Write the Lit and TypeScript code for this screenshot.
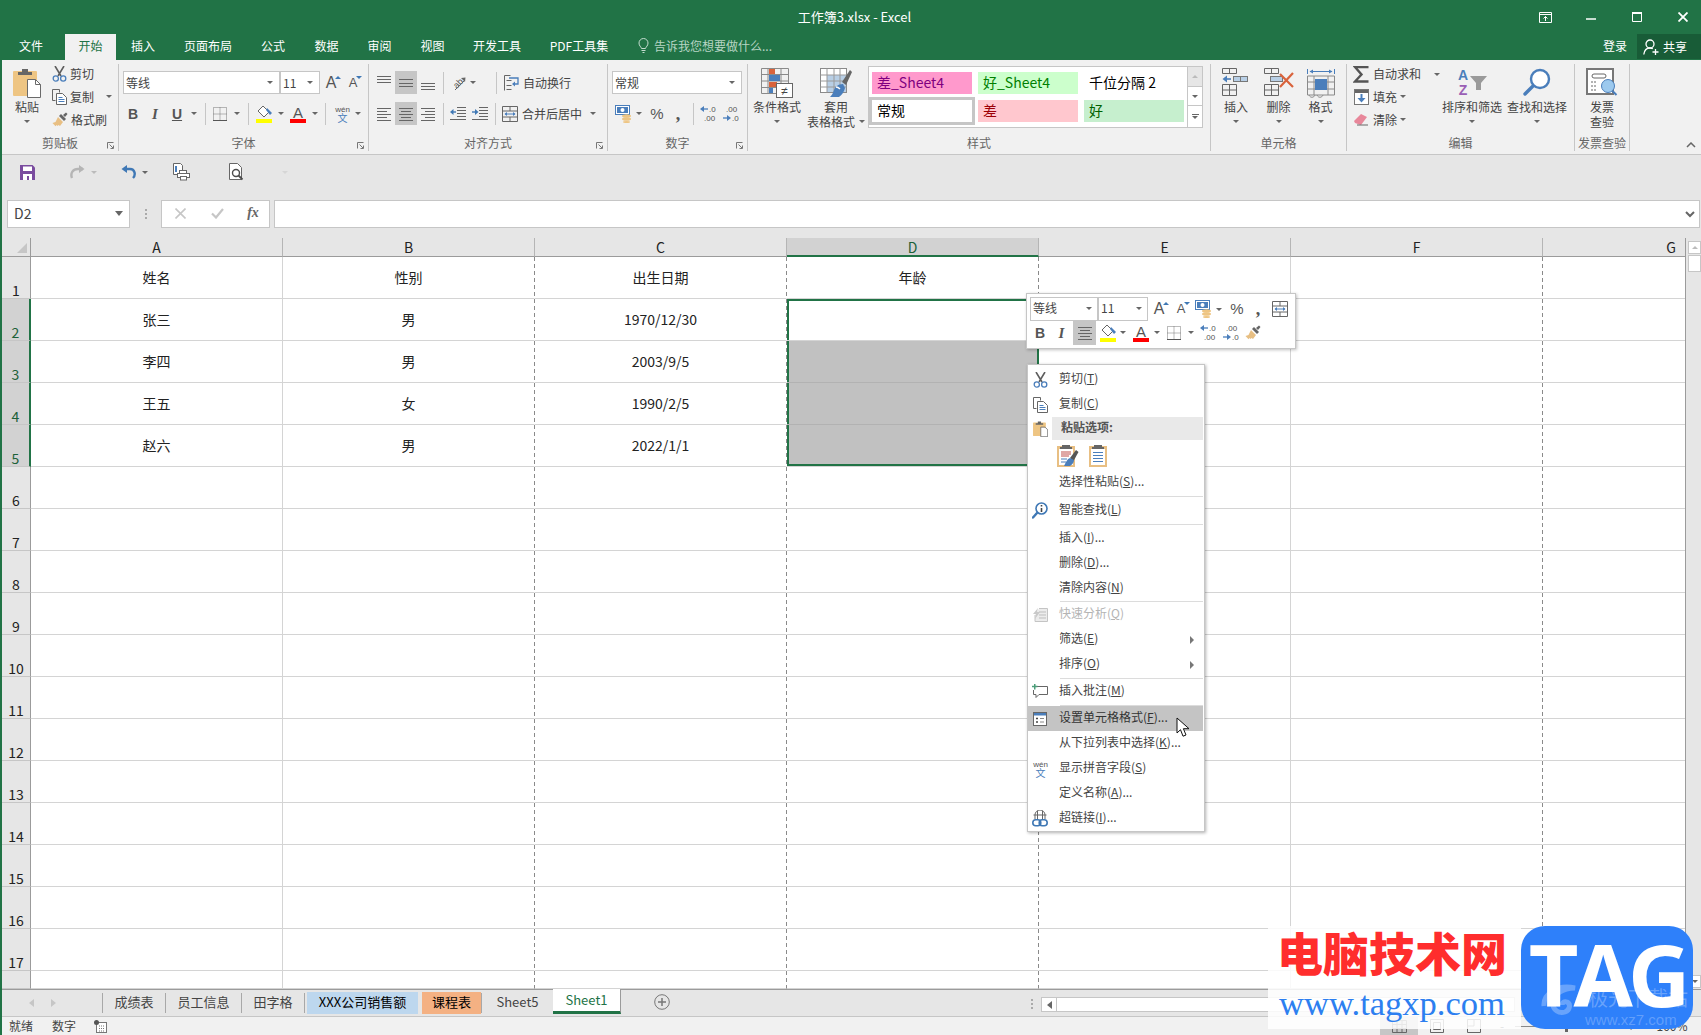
import {LitElement, html, svg, css} from 'lit';
import {customElement} from 'lit/decorators.js';

const caret = html`<i class="caret"></i>`;

// ribbon and menu icons
const icons = {
  paste: html`<svg width="28" height="30" viewBox="0 0 28 30"><rect x="0" y="3" width="24" height="25" rx="1" fill="#eec583"/><path d="M5 7V4h4V1h6v3h4v3z" fill="#666"/><path d="M14.5 11.5h8l5 5v13h-13z" fill="#fff" stroke="#6a6a6a"/><path d="M22.5 11.5v5h5" fill="none" stroke="#6a6a6a"/></svg>`,
  scissors: html`<svg width="15" height="16" viewBox="0 0 15 16"><path d="M3 0l6 10M12 0L6 10" stroke="#5e5e5e" stroke-width="1.6"/><circle cx="3.8" cy="12.5" r="2.6" fill="none" stroke="#4a7ebb" stroke-width="1.3"/><circle cx="11.2" cy="12.5" r="2.6" fill="none" stroke="#4a7ebb" stroke-width="1.3"/></svg>`,
  copy: html`<svg width="15" height="16" viewBox="0 0 15 16"><path d="M.5.5h7v3M.5.5v11h3" fill="none" stroke="#666"/><path d="M4.5 4.5h6l4 4v7h-10z" fill="#fff" stroke="#666"/><path d="M6.500 8.500h4M6.500 10.500h6M6.500 12.500h6" stroke="#4a7ebb"/></svg>`,
  brush: html`<svg width="16" height="16" viewBox="0 0 16 16"><path d="M6 5l5 5-3 4-1.500-1-1 1-1-1-1 1.200L.5 11l3-1z" fill="#e8bf83"/><path d="M7 4l5 5 2-2-5-5z" fill="#666"/><path d="M11 3l3-2.500 1.500 1.500-2.500 3z" fill="#666"/></svg>`,
  border: html`<svg width="14" height="14" viewBox="0 0 14 14"><path d="M.5.5h13v13H.5zM7 .5v13M.5 7h13" fill="none" stroke="#777" stroke-dasharray="1 1"/><path d="M0 13.500h14" stroke="#555"/></svg>`,
  fill: html`<svg width="17" height="18" viewBox="0 0 17 18"><path d="M7 1l6 6-5 5-6-6z" fill="#fff" stroke="#666"/><path d="M11 3l5 5-2 2-4-5z" fill="#4a7ebb"/><rect x="0" y="14" width="16" height="4" fill="#ff0"/></svg>`,
  fontColor: html`<svg width="16" height="18" viewBox="0 0 16 18"><text x="8" y="12.500" text-anchor="middle" font-family="Liberation Sans" font-size="15" fill="#555">A</text><rect x="0" y="14" width="16" height="4" fill="#f00"/></svg>`,
  wrap: html`<svg width="15" height="16" viewBox="0 0 15 16"><path d="M.5 15.500V.5h6M2.500 5.500h5M2.500 10.500h5M2.500 14.500h5" fill="none" stroke="#666"/><path d="M5 3h9v6H9" fill="none" stroke="#4a7ebb" stroke-width="1.300"/><path d="M11 6.500L8 9l3 2.500z" fill="#4a7ebb"/></svg>`,
  merge: html`<svg width="16" height="16" viewBox="0 0 16 16"><path d="M.5.5h15v15H.5zM.5 5h15M.5 11h15M8 .5V5M8 11v4.500" fill="none" stroke="#666"/><path d="M3 8h10" stroke="#4a7ebb"/><path d="M5 6L2.500 8 5 10zM11 6l2.500 2L11 10z" fill="#4a7ebb"/></svg>`,
  orient: html`<svg width="16" height="16" viewBox="0 0 16 16"><text x="3" y="13" transform="rotate(-45 6 9)" font-family="Liberation Sans" font-size="9" fill="#555">ab</text><path d="M5 15L15 5" stroke="#666"/><path d="M11 3l4.500-.5L15 7z" fill="#666"/></svg>`,
  currency: html`<svg width="17" height="18" viewBox="0 0 17 18"><rect x=".5" y=".5" width="14" height="9" fill="#fff" stroke="#4a7ebb"/><rect x="2" y="2" width="11" height="6" fill="#4a7ebb"/><circle cx="7.500" cy="5" r="2" fill="#fff"/><ellipse cx="11.500" cy="11" rx="4.500" ry="1.800" fill="#eec583"/><ellipse cx="11.500" cy="14" rx="4.500" ry="1.800" fill="#eec583"/><ellipse cx="11.500" cy="17" rx="3.500" ry="1" fill="#eec583"/></svg>`,
  decInc: html`<svg width="19" height="17" viewBox="0 0 19 17"><path d="M8 4H2" stroke="#4a7ebb" stroke-width="1.300"/><path d="M4 1L0 4l4 3z" fill="#4a7ebb"/><text x="9" y="7" font-family="Liberation Sans" font-size="8" fill="#555">.0</text><text x="4" y="16" font-family="Liberation Sans" font-size="8" fill="#555">.00</text></svg>`,
  decDec: html`<svg width="19" height="17" viewBox="0 0 19 17"><text x="4" y="7" font-family="Liberation Sans" font-size="8" fill="#555">.00</text><path d="M1 13h6" stroke="#4a7ebb" stroke-width="1.300"/><path d="M5 10l4 3-4 3z" fill="#4a7ebb"/><text x="10" y="16" font-family="Liberation Sans" font-size="8" fill="#555">.0</text></svg>`,
  wen: html`<svg width="17" height="18" viewBox="0 0 17 18"><text x="8.500" y="7" text-anchor="middle" font-family="Liberation Sans" font-size="8" fill="#555">wén</text><text x="8.500" y="17" text-anchor="middle" font-family="Noto Sans CJK SC" font-size="10" fill="#4a7ebb">文</text></svg>`,
  cond: html`<svg width="32" height="30" viewBox="0 0 32 30"><path d="M.5.500h27v25H.5zM7 .5v25M20 .5v25M.5 6.500h27M.5 13h27M.5 19.500h27" fill="none" stroke="#8a8a8a"/><rect x="8" y="1" width="6" height="5" fill="#d9633c"/><rect x="8" y="7" width="11" height="6" fill="#4a7ebb"/><rect x="8" y="14" width="8" height="5" fill="#d9633c"/><rect x="8" y="20" width="4" height="5" fill="#4a7ebb"/><rect x="15.500" y="15.500" width="16" height="14" fill="#fff" stroke="#666"/><text x="23.500" y="26.500" text-anchor="middle" font-family="Liberation Sans" font-size="12" fill="#444">≠</text></svg>`,
  table: html`<svg width="32" height="30" viewBox="0 0 32 30"><rect x=".5" y=".5" width="26" height="24" fill="#fff" stroke="#8a8a8a"/><rect x="7" y="7" width="19" height="17" fill="#b8cfe6"/><path d="M7 .5v24M14 .5v24M20 .5v24M.5 7h26M.5 13h26M.5 19h26" stroke="#9a9a9a"/><path d="M22 14l8-12 2 2-6 13z" fill="#666"/><path d="M23 16c-5 0-8 3-9 6s-2 5-4 7h9c3-2 5-5 6-9z" fill="#4a7ebb"/><path d="M16 19c2 0 3 1 4 2" stroke="#fff" fill="none" stroke-width="1.400"/></svg>`,
  insert: html`<svg width="28" height="28" viewBox="0 0 28 28"><path d="M.5.5h14v5H.5zM7.500.5v5M.5 16.500h14v11H.5zM.5 22h14M7.500 16.500v11" fill="none" stroke="#666"/><rect x="11.500" y="8.500" width="14" height="5" fill="#b8cfe6" stroke="#777"/><path d="M18.500 8.500v5" stroke="#777"/><path d="M9 11H2" stroke="#4a7ebb" stroke-width="1.600"/><path d="M5 7.500L.5 11 5 14.500z" fill="#4a7ebb"/></svg>`,
  remove: html`<svg width="30" height="28" viewBox="0 0 30 28"><path d="M.5.5h14v5H.5zM7.500.5v5M.5 16.500h14v11H.5zM.5 22h14M7.500 16.500v11" fill="none" stroke="#666"/><rect x="6.500" y="8.500" width="12" height="5" fill="#b8cfe6" stroke="#777"/><path d="M16 6l13 13M29 5L16 19" stroke="#d9633c" stroke-width="2.200"/></svg>`,
  format: html`<svg width="28" height="30" viewBox="0 0 28 30"><path d="M.5 1v5M27.500 1v5M3 3.500h22" stroke="#4a7ebb" fill="none"/><path d="M6 1.500L2.500 3.500 6 5.500zM22 1.500l3.500 2-3.500 2z" fill="#4a7ebb"/><path d="M.5 8h27v19H.5zM7 8v19M21 8v19M.5 14h27M.5 21h27" fill="none" stroke="#8a8a8a"/><rect x="8" y="11" width="12" height="11" fill="#4a7ebb"/><path d="M2 27c1 3 5 3 6 0M10 27c1 3 5 3 6 0" fill="none" stroke="#8a8a8a"/></svg>`,
  sigma: html`<svg width="17" height="17" viewBox="0 0 17 17"><path d="M15.500 1H2l6.500 7.500L2 15.500h13.500" fill="none" stroke="#555" stroke-width="2.400"/></svg>`,
  fillDown: html`<svg width="15" height="16" viewBox="0 0 15 16"><rect x=".5" y=".5" width="14" height="15" fill="#fff" stroke="#777"/><rect x="1" y="1" width="13" height="3" fill="#666"/><path d="M7.500 5v7" stroke="#4a7ebb" stroke-width="2"/><path d="M3.500 9l4 4.500 4-4.500z" fill="#4a7ebb"/></svg>`,
  eraser: html`<svg width="16" height="14" viewBox="0 0 16 14"><path d="M8 1l6 3-6 8-6-2-1-2z" fill="#e8879a"/><path d="M4 12h11" stroke="#666"/></svg>`,
  sort: html`<svg width="30" height="28" viewBox="0 0 30 28"><text x="6" y="12" text-anchor="middle" font-family="Liberation Sans" font-weight="700" font-size="14" fill="#4a7ebb">A</text><text x="6" y="27" text-anchor="middle" font-family="Liberation Sans" font-weight="700" font-size="14" fill="#9a5fb5">Z</text><path d="M13 8h17l-6 7v7h-5v-7z" fill="#9a9a9a"/></svg>`,
  find: html`<svg width="28" height="29" viewBox="0 0 28 29"><circle cx="17" cy="11" r="9" fill="#fff" stroke="#4a7ebb" stroke-width="2.400"/><path d="M10 18L2 26" stroke="#4a7ebb" stroke-width="3.400" stroke-linecap="round"/></svg>`,
  invoice: html`<svg width="32" height="28" viewBox="0 0 32 28"><rect x="1" y="1" width="26" height="25" fill="#fff" stroke="#777" stroke-width="2"/><rect x="6" y="6" width="14" height="4" rx="2" fill="none" stroke="#666"/><path d="M5 14h5M5 18h5M5 22h5" stroke="#666" stroke-dasharray="2 1"/><circle cx="22" cy="18" r="6.500" fill="#9cc9ee" stroke="#4a7ebb"/><path d="M26.500 23l4 4" stroke="#4a7ebb" stroke-width="2"/></svg>`,
  save: html`<svg width="15" height="15" viewBox="0 0 15 15"><path d="M0 0h12.500L15 2.500V15H0z" fill="#7a4c9f"/><rect x="3" y="1.500" width="9" height="4.500" fill="#fff"/><rect x="3" y="9" width="9" height="6" fill="#fff"/><rect x="7" y="11" width="2" height="4" fill="#7a4c9f"/></svg>`,
  redo: html`<svg width="15" height="14" viewBox="0 0 15 14"><path d="M2 13C0 8 3 4 8 4h5" fill="none" stroke="#b5b5b5" stroke-width="2.400"/><path d="M9 0l5.500 4L9 8z" fill="#b5b5b5"/></svg>`,
  undo: html`<svg width="15" height="14" viewBox="0 0 15 14"><path d="M4 4h5c5 0 6 6 3 9" fill="none" stroke="#3f78b5" stroke-width="2.400"/><path d="M6 0L.5 4 6 8z" fill="#3f78b5"/></svg>`,
  printPreview: html`<svg width="18" height="18" viewBox="0 0 18 18"><path d="M.5.5h7l2 2v9H.5z" fill="#fff" stroke="#666"/><path d="M3 3v6" stroke="#4a7ebb" stroke-width="2"/><rect x="6.500" y="7.500" width="7" height="3" fill="#fff" stroke="#666"/><rect x="4.500" y="10.500" width="12" height="4" fill="#fff" stroke="#666"/><rect x="7.500" y="13.500" width="6" height="3.500" fill="#fff" stroke="#666"/></svg>`,
  search: html`<svg width="15" height="18" viewBox="0 0 15 18"><path d="M.5.5h8l4 4v12H.5z" fill="#fff" stroke="#666"/><circle cx="7" cy="10" r="3.500" fill="#fff" stroke="#4c4c4c" stroke-width="1.400"/><path d="M9.500 12.500l4 4" stroke="#4c4c4c" stroke-width="1.800"/></svg>`,
  pasteKeep: html`<svg width="22" height="23" viewBox="0 0 22 23"><rect x="0" y="2" width="18" height="21" fill="#e8bf83"/><rect x="2" y="5" width="14" height="16" fill="#fff"/><path d="M5 3V1h8v2h2v2H3V3z" fill="#666"/><path d="M4 8h10M4 10h10M4 12h8" stroke="#c0504d"/><path d="M4 15h6M4 18h5" stroke="#4a7ebb"/><path d="M13 14l6-8 2.500 2-5 9z" fill="#555"/><path d="M13 14c-3 1-4 4-6 8h6c3-2 4-4 4-6z" fill="#4a7ebb"/></svg>`,
  pasteValues: html`<svg width="18" height="23" viewBox="0 0 18 23"><rect x="0" y="2" width="18" height="21" fill="#e8bf83"/><rect x="2" y="5" width="14" height="16" fill="#fff"/><path d="M5 3V1h8v2h2v2H3V3z" fill="#666"/><path d="M4 8.500h10M4 11.500h10M4 14.500h10M4 17.500h10" stroke="#4a7ebb"/></svg>`,
  lookup: html`<svg width="16" height="17" viewBox="0 0 16 17"><circle cx="9.500" cy="6.500" r="5.500" fill="#fff" stroke="#3f78b5" stroke-width="1.600"/><path d="M9.500 6v4M9.500 3v1.500" stroke="#444" stroke-width="1.600"/><path d="M5 11l-4 4.500" stroke="#3f78b5" stroke-width="2.400" stroke-linecap="round"/></svg>`,
  quick: html`<svg width="15" height="14" viewBox="0 0 15 14"><path d="M6 .5h8.500v13H2V7" fill="#ececec" stroke="#c4c4c4"/><path d="M6 4h7M6 7h7M6 10h7" stroke="#bdbdbd"/><path d="M5 0L0 6h3l-1 5 5-7H4z" fill="#c9c9c9"/></svg>`,
  comment: html`<svg width="16" height="15" viewBox="0 0 16 15"><path d="M5 2.500h10.500v8H7l-3 3v-3H1.500V6" fill="#fff" stroke="#666"/><path d="M0 2.500h5.500M2.750 0v5.500" stroke="#4c9e7a" stroke-width="1.500"/></svg>`,
  cellFmt: html`<svg width="14" height="14" viewBox="0 0 14 14"><rect x=".5" y=".5" width="13" height="13" fill="#fff" stroke="#666"/><rect x="1" y="1" width="12" height="2.500" fill="#4a7ebb"/><path d="M3 6.500h2M3 10h2" stroke="#444" stroke-width="1.400"/><path d="M7 6.500h4M7 10h4" stroke="#888"/></svg>`,
  link: html`<svg width="16" height="17" viewBox="0 0 16 17"><path d="M3 9V5a5 5 0 0 1 10 0v4M1.500 5h13M5.500 1v8M10.500 1v8" fill="none" stroke="#666"/><rect x=".8" y="9.800" width="8" height="6" rx="3" fill="none" stroke="#3f78b5" stroke-width="1.600"/><rect x="7.200" y="9.800" width="8" height="6" rx="3" fill="none" stroke="#3f78b5" stroke-width="1.600"/></svg>`,
  cursor: html`<svg width="14" height="21" viewBox="0 0 14 21"><path d="M1 1v15l3.500-3.300 2.500 6.500 3-1.200-2.600-6.300H13z" fill="#fff" stroke="#111"/></svg>`,
  person: html`<svg width="17" height="16" viewBox="0 0 17 16"><circle cx="7" cy="5" r="4" fill="none" stroke="#fff" stroke-width="1.300"/><path d="M.8 15.500c.5-4 3-6.500 6.200-6.500 1 0 2 .2 2.800.7" fill="none" stroke="#fff" stroke-width="1.300"/><path d="M9.500 13h6M12.500 10v6" stroke="#fff" stroke-width="1.300"/></svg>`,
  bulb: html`<svg width="11" height="16" viewBox="0 0 11 16"><path d="M3.500 10.500C3 8.500 1 8 1 5a4.500 4.500 0 0 1 9 0c0 3-2 3.500-2.500 5.500z" fill="none" stroke="#c4dccf"/><path d="M3.500 12.500h4M4.500 14.500h2" stroke="#c4dccf"/></svg>`,
  launcher: html`<svg width="7" height="7" viewBox="0 0 7 7"><path d="M.5 6.500v-6h6M2.500 2.500l3.500 3.500M6.500 3.500v3h-3" fill="none" stroke="#777"/></svg>`,
  macro: html`<svg width="13" height="13" viewBox="0 0 13 13"><rect x="2.500" y="2.500" width="10" height="10" fill="#fff" stroke="#777"/><path d="M5 6h6M5 8.500h6M5 11h6" stroke="#777" stroke-dasharray="1 1"/><circle cx="2.500" cy="2.500" r="2.500" fill="#555"/></svg>`,
};

const alignIcon = (ys: number[], xs: [number, number][]) => html`<svg width="14" height="14" viewBox="0 0 14 14">
  ${ys.map((y, i) => svg`<path d="M${xs[i][0]} ${y + .5}H${xs[i][1]}" stroke="#666"/>`)}
</svg>`;
const full: [number, number][] = [[0, 14], [0, 14], [0, 14]];
const aTop = alignIcon([0, 3, 6], full);
const aMid = alignIcon([3, 7, 10], full);
const aBot = alignIcon([7, 10, 13], full);
const aLeft = alignIcon([1, 4, 7, 10, 13], [[0, 14], [0, 10], [0, 14], [0, 10], [0, 14]]);
const aCenter = alignIcon([1, 4, 7, 10, 13], [[0, 14], [2, 12], [0, 14], [2, 12], [0, 14]]);
const aRight = alignIcon([1, 4, 7, 10, 13], [[0, 14], [4, 14], [0, 14], [4, 14], [0, 14]]);
const indentDec = html`<svg width="16" height="13" viewBox="0 0 16 13"><path d="M7 .5h9M7 3.500h9M7 6.500h9M7 9.500h9M0 12.500h16" stroke="#666"/><path d="M6 5H2" stroke="#3f78b5" stroke-width="1.400"/><path d="M3.500 2L0 5l3.500 3z" fill="#3f78b5"/></svg>`;
const indentInc = html`<svg width="16" height="13" viewBox="0 0 16 13"><path d="M7 .5h9M7 3.500h9M7 6.500h9M7 9.500h9M0 12.500h16" stroke="#666"/><path d="M0 5h4" stroke="#3f78b5" stroke-width="1.400"/><path d="M3 2l3.500 3L3 8z" fill="#3f78b5"/></svg>`;

type MenuRow = {label?: string, key?: string, after?: string, icon?: unknown, sub?: boolean, off?: boolean, hot?: boolean, sep?: string};

const menu: MenuRow[] = [
  {label: '剪切', key: 'T', icon: icons.scissors},
  {label: '复制', key: 'C', icon: icons.copy},
  {sep: 'paste'},
  {label: '选择性粘贴', key: 'S', after: '...'},
  {sep: 'wide'},
  {label: '智能查找', key: 'L', icon: icons.lookup},
  {sep: 'wide'},
  {label: '插入', key: 'I', after: '...'},
  {label: '删除', key: 'D', after: '...'},
  {label: '清除内容', key: 'N'},
  {sep: 'thin'},
  {label: '快速分析', key: 'Q', icon: icons.quick, off: true},
  {label: '筛选', key: 'E', sub: true},
  {label: '排序', key: 'O', sub: true},
  {sep: 'mid'},
  {label: '插入批注', key: 'M', icon: icons.comment},
  {sep: 'mid'},
  {label: '设置单元格格式', key: 'F', after: '...', icon: icons.cellFmt, hot: true},
  {label: '从下拉列表中选择', key: 'K', after: '...'},
  {label: '显示拼音字段', key: 'S', icon: icons.wen},
  {label: '定义名称', key: 'A', after: '...'},
  {label: '超链接', key: 'I', after: '...', icon: icons.link},
];

const columns = ['A', 'B', 'C', 'D', 'E', 'F', 'G'];
const table: Record<number, string[]> = {
  1: ['姓名', '性别', '出生日期', '年龄'],
  2: ['张三', '男', '1970/12/30', ''],
  3: ['李四', '男', '2003/9/5', ''],
  4: ['王五', '女', '1990/2/5', ''],
  5: ['赵六', '男', '2022/1/1', ''],
};
const rows = Array.from({length: 18}, (_, i) => i + 1);

@customElement('app-root')
export class AppRoot extends LitElement {
  static styles = css`
    :host {
      display: block;
      position: relative;
      width: 1701px;
      height: 1035px;
      overflow: hidden;
      box-sizing: border-box;
      border-left: 2px solid #217346;
      background: #f1f1f1;
      font-family: 'Noto Sans CJK SC', 'Liberation Sans', sans-serif;
      font-size: 12px;
      line-height: 16px;
      color: #444;
    }
    svg { display: block; }
    i.caret {
      display: block;
      width: 0;
      height: 0;
      border: 3px solid transparent;
      border-top: 3.5px solid #666;
      border-bottom: 0;
    }
    i.caret.faintc { border-top-color: #bbb; }
    u { text-underline-offset: 1px; }

    .titlebar {
      height: 34px;
      background: #217346;
      color: #fff;
      display: grid;
      grid-template-columns: 1fr auto 1fr;
      align-items: center;
      font-size: 13px;
    }
    .title { padding-left: 6px; }
    .winbtns {
      justify-self: end;
      display: grid;
      grid-template-columns: repeat(4, 46px);
      margin-right: -5px;
      justify-items: center;
    }
    .tabs {
      height: 26px;
      background: #217346;
      color: #fff;
      display: flex;
      align-items: stretch;
    }
    .tablist {
      display: grid;
      grid-template-columns: 63px 51px 54px 76px 54px 53px 53px 53px 76px 88px;
      width: 621px;
    }
    .tab { display: flex; align-items: center; justify-content: center; padding-bottom: 2px; box-sizing: border-box; }
    .tab:first-child { padding-right: 5px; }
    .tab.on { background: #f1f1f1; color: #217346; }
    .tell {
      display: flex;
      align-items: center;
      gap: 5px;
      margin-left: 15px;
      color: #b7d5c4;
      padding-bottom: 2px;
    }
    .login { margin-left: auto; width: 40px; box-sizing: border-box; padding-right: 4px; text-align: center; line-height: 24px; }
    .share {
      width: 64px;
      box-sizing: border-box;
      background: #185c37;
      display: flex;
      align-items: center;
      gap: 3px;
      padding-left: 6px;
      margin-bottom: 1px;
    }

    .ribbon {
      height: 95px;
      box-sizing: border-box;
      border-bottom: 1px solid #c6c6c6;
      display: flex;
      align-items: flex-start;
      padding-top: 4px;
      background: #f1f1f1;
    }
    .group {
      height: 87px;
      box-sizing: border-box;
      border-right: 1px solid #c6c6c6;
      display: flex;
      flex-direction: column;
      flex: none;
    }
    .g-clip { width: 117px; }
    .g-font { width: 250px; }
    .g-align { width: 239px; }
    .g-num { width: 140px; }
    .g-style { width: 463px; }
    .g-cell { width: 136px; }
    .g-edit { width: 228px; }
    .g-inv { width: 55px; }
    .body { flex: 1; min-height: 0; }
    .glabel {
      height: 16px;
      line-height: 16px;
      text-align: center;
      color: #666;
      position: relative;
    }
    .launch { position: absolute; right: 4px; bottom: 2px; }

    .large {
      display: flex;
      flex-direction: column;
      align-items: center;
      padding-top: 4px;
      line-height: 15px;
      white-space: nowrap;
      flex: none;
    }
    .large .ic { height: 31px; display: flex; align-items: flex-start; justify-content: center; }
    .large .drop { height: 15px; display: flex; align-items: center; gap: 4px; }
    .w58 { width: 58px; }
    .w60 { width: 60px; }
    .small { display: flex; align-items: center; gap: 5px; white-space: nowrap; padding-bottom: 2px; box-sizing: border-box; }

    .b-clip { display: grid; grid-template-columns: 50px 1fr; }
    .clip-list { display: grid; grid-template-rows: 22px 23px 23px; }
    .clip-list .small { gap: 3px; }
    .clip-list .copy-caret { margin-left: 9px; }

    .stack { padding-top: 7px; display: grid; grid-template-rows: 23px 23px; row-gap: 8px; }
    .row { display: grid; align-items: center; justify-items: center; }
    .sep { width: 1px; height: 22px; background: #c6c6c6; }
    .on { background: #c6c6c6; align-self: stretch; justify-self: stretch; display: flex; align-items: center; justify-content: center; }
    .combo {
      height: 23px;
      box-sizing: border-box;
      background: #fff;
      border: 1px solid #c6c6c6;
      display: flex;
      align-items: center;
      justify-content: space-between;
      padding: 0 6px 0 2px;
      justify-self: stretch;
      color: #444;
    }
    .b { font-family: 'Liberation Sans', sans-serif; font-size: 14px; font-weight: 700; color: #555; }
    .it { font-family: 'Liberation Serif', serif; font-size: 15px; font-style: italic; font-weight: 700; color: #555; }
    .un { font-family: 'Liberation Sans', sans-serif; font-size: 14px; font-weight: 700; color: #555; text-decoration: underline; }
    .pct { font-family: 'Liberation Sans', sans-serif; font-size: 15px; color: #555; }
    .cm { font-family: 'Liberation Serif', serif; font-size: 18px; font-weight: 700; color: #555; line-height: 12px; }
    .grow { font-family: 'Liberation Sans', sans-serif; font-size: 16px; color: #555; position: relative; }
    .shrink { font-family: 'Liberation Sans', sans-serif; font-size: 13px; color: #555; position: relative; }
    .grow::after, .shrink::after {
      content: '';
      position: absolute;
      right: -5px;
      top: 1px;
      border: 3px solid transparent;
      border-top: 0;
      border-bottom: 3.5px solid #3f78b5;
    }
    .shrink::after { border-bottom: 0; border-top: 3.5px solid #3f78b5; }

    .b-font { padding-left: 3px; }
    .font-top { grid-template-columns: 157px 40px 22px 22px; margin-left: 1px; }
    .font-bot { grid-template-columns: 22px 22px 22px 12px 10px 20px 14px 8px 24px 10px 24px 10px 10px 24px 8px; }
    .b-align { padding-left: 3px; }
    .al-top { grid-template-columns: 23px 22px 22px 8px 22px 8px 15px 8px 22px auto; width: fit-content; }
    .al-bot { grid-template-columns: 23px 22px 22px 8px 22px 22px 8px 22px 60px 24px; width: fit-content; }
    .al-text { justify-self: start; padding-left: 1px; white-space: nowrap; }
    .b-num { padding-left: 4px; }
    .num-top { grid-template-columns: 130px; }
    .num-bot { grid-template-columns: 22px 10px 2px 22px 20px 10px 22px 22px; }

    .b-style { display: flex; align-items: flex-start; }
    .gallery {
      margin: 2px 0 0 2px;
      width: 335px;
      height: 62px;
      box-sizing: border-box;
      background: #fff;
      border: 1px solid #c6c6c6;
      display: flex;
    }
    .g-cells {
      flex: 1;
      padding: 5px 0 0 3px;
      display: grid;
      grid-template-columns: repeat(3, 100px);
      grid-auto-rows: 22px;
      column-gap: 6px;
      row-gap: 6px;
      font-size: 14px;
      line-height: 20px;
      color: #000;
    }
    .g-cells div { padding-left: 5px; white-space: nowrap; }
    .bad2 { background: #ff99cc; color: #800080; }
    .good2 { background: #ccffcc; color: #008000; }
    .normal { box-shadow: 0 0 0 3px #c6c6c6; }
    .bad { background: #ffc7ce; color: #9c0006; }
    .good { background: #c6efce; color: #006100; }
    .g-scroll {
      width: 14px;
      display: grid;
      grid-template-rows: 20px 19px 21px;
      border-left: 1px solid #c6c6c6;
      justify-items: center;
      align-items: center;
    }
    .g-scroll > div { border-bottom: 1px solid #c6c6c6; justify-self: stretch; align-self: stretch; display: flex; align-items: center; justify-content: center; }
    .g-scroll .first { background: #e6e6e6; }
    .g-scroll .last { border: 0; flex-direction: column; gap: 1px; }
    .bar { width: 7px; height: 1px; background: #666; }
    .up { border-top: 0 !important; border-bottom: 3.5px solid #bbb !important; }

    .b-cell { padding-left: 4px; display: grid; grid-template-columns: 42px 43px 41px; }
    .b-edit { padding-left: 5px; display: grid; grid-template-columns: 90px 60px 5px 60px; }
    .edit-list { display: grid; grid-template-rows: 22px 23px 23px; }
    .edit-list .small { gap: 3px; }
    .edit-list .ic { width: 18px; display: flex; justify-content: center; }
    .edit-list .sum { margin-left: 10px; }
    .collapse { margin: 78px 0 0 auto; padding-right: 5px; }

    .qat {
      height: 36px;
      box-sizing: border-box;
      padding-bottom: 2px;
      background: #e6e6e6;
      display: grid;
      grid-template-columns: 22px 28px 22px 12px 17px 22px 12px 20px 22px 32px 22px 32px 12px 1fr;
      padding-left: 14px;
      align-items: center;
      justify-items: center;
    }
    .faint { opacity: .12; }
    .fbar {
      height: 47px;
      box-sizing: border-box;
      background: #e6e6e6;
      padding: 9px 1px 10px 5px;
      display: flex;
    }
    .fbox { background: #fff; border: 1px solid #c6c6c6; box-sizing: border-box; height: 28px; }
    .name { width: 123px; display: flex; align-items: center; justify-content: space-between; padding: 0 6px 2px; font-size: 14px; }
    .name i.caret { border-width: 4px; border-top-width: 5px; }
    .dots { width: 31px; display: flex; flex-direction: column; align-items: center; justify-content: center; gap: 2px; }
    .dots span { width: 2px; height: 2px; background: #aaa; }
    .fx { width: 109px; padding-bottom: 2px; display: grid; grid-template-columns: 37px 36px 36px; align-items: center; justify-items: center; }
    .fxt { font-family: 'Liberation Serif', serif; font-style: italic; font-weight: 700; font-size: 14px; color: #666; }
    .input { flex: 1; margin-left: 4px; display: flex; align-items: center; justify-content: flex-end; padding-right: 4px; }

    .sheet { display: flex; height: 751px; }
    .grid {
      width: 1684px;
      box-sizing: border-box;
      border-right: 1px solid #9b9b9b;
      display: grid;
      grid-template-columns: 29px repeat(6, 252px) 1fr;
      grid-template-rows: 19px repeat(17, 42px) 18px;
      background: #fff;
      overflow: hidden;
      color: #222;
      font-size: 14px;
    }
    .corner { background: #e6e6e6; border-bottom: 1px solid #9b9b9b; border-right: 1px solid #9b9b9b; display: flex; align-items: flex-end; justify-content: flex-end; padding: 0 3px 3px 0; }
    .tri { width: 0; height: 0; border-style: solid; border-width: 0 0 10px 10px; border-color: transparent transparent #c6c6c6 transparent; }
    .chead {
      background: #e6e6e6;
      border-bottom: 1px solid #9b9b9b;
      border-right: 1px solid #b5b5b5;
      display: flex;
      align-items: center;
      justify-content: center;
      box-sizing: border-box;
      padding-bottom: 1px;
    }
    .chead.last { border-right: 0; justify-content: flex-end; padding-right: 9px; }
    .chead.sel { background: #d2d2d2; border-bottom: 2px solid #217346; color: #1c6138; padding-bottom: 0; }
    .rhead {
      background: #e6e6e6;
      border-bottom: 1px solid #c6c6c6;
      border-right: 1px solid #9b9b9b;
      box-sizing: border-box;
      display: flex;
      align-items: flex-end;
      justify-content: center;
    }
    .rhead.sel { background: #d2d2d2; color: #1c6138; border-right: 2px solid #217346; }
    .cell {
      box-sizing: border-box;
      border-right: 1px solid #d4d4d4;
      border-bottom: 1px solid #d4d4d4;
      padding-bottom: 2px;
      display: flex;
      align-items: center;
      justify-content: center;
    }
    /* page break lines: longer dashes than border-style dashed gives */
    .cell.brk {
      border-right: 1px solid transparent;
      background-image: repeating-linear-gradient(to bottom, #8a8a8a 0 4px, transparent 4px 7px);
      background-size: 1px 100%;
      background-position: right top;
      background-repeat: no-repeat;
      background-origin: border-box;
    }
    .cell.last { border-right: 0; }
    .cell.d2, .cell.d3, .cell.d5 { border-right: 1px solid #217346; }
    .cell.d2 { box-shadow: inset 2px 2px 0 #217346, inset -1px 0 0 #217346; }
    .cell.d3 { background-color: #c1c1c1; box-shadow: inset 2px 0 0 #217346, inset -1px 0 0 #217346; border-bottom-color: #b2b2b2; }
    .cell.d5 { background-color: #c1c1c1; box-shadow: inset 2px -2px 0 #217346, inset -1px 0 0 #217346; }
    .vscroll {
      flex: 1;
      background: #e6e6e6;
      padding: 3px 0 0 2px;
      display: flex;
      flex-direction: column;
    }
    .vbtn { height: 13px; background: #fff; border: 1px solid #c6c6c6; box-sizing: border-box; display: flex; align-items: center; justify-content: center; }
    .thumb { height: 17px; background: #fff; border: 1px solid #c6c6c6; box-sizing: border-box; margin-top: 1px; }
    .vbtn.down { margin-top: auto; margin-bottom: 1px; }

    .sheets {
      height: 28px;
      box-sizing: border-box;
      background: #e6e6e6;
      border-top: 1px solid #9b9b9b;
      border-bottom: 1px solid #c6c6c6;
      display: flex;
      align-items: flex-start;
      font-size: 13px;
      padding-top: 2px;
    }
    .nav { width: 100px; display: grid; grid-template-columns: 16px 29px; padding-left: 21px; box-sizing: border-box; height: 22px; align-items: center; justify-items: center; flex: none; }
    .lf { width: 0; height: 0; border: 4px solid transparent; border-left: 0; border-right: 5px solid #c6c6c6; }
    .rt { width: 0; height: 0; border: 4px solid transparent; border-right: 0; border-left: 5px solid #c6c6c6; }
    .stabs { display: grid; grid-template-columns: 63px 76px 63px 3px 111px 4px 59px 1px 71px 68px; height: 22px; flex: none; }
    .st {
      display: flex;
      align-items: center;
      justify-content: center;
      box-sizing: border-box;
      border-left: 1px solid #a8a8a8;
      margin: 1px 0;
      padding-bottom: 3px;
      white-space: nowrap;
    }
    .st.plain { border-left: 0; margin: 0; }
    .st.blue { background: #bdd7ee; color: #000; border: 0; margin: 0; }
    .st.orange { background: #f4b183; color: #000; border: 0; margin: 0; }
    .st.active {
      background: #fff;
      color: #217346;
      border: 0;
      border-right: 1px solid #9b9b9b;
      border-bottom: 3px solid #217346;
      margin: -3px 0 0;
      padding-bottom: 0;
      height: 25px;
    }
    .plus { width: 82px; display: flex; justify-content: center; flex: none; padding-top: 2px; }
    .sh-dots { margin-left: auto; width: 14px; display: flex; flex-direction: column; align-items: center; gap: 2px; padding-top: 7px; }
    .sh-dots span { width: 2px; height: 2px; background: #aaa; }
    .hscroll { margin: 5px 186px 0 2px; width: 474px; height: 15px; box-sizing: border-box; background: #fff; border: 1px solid #c6c6c6; display: flex; }
    .hleft { width: 14px; border-right: 1px solid #c6c6c6; display: flex; align-items: center; justify-content: center; }
    .hleft .lf { border-right-color: #666; }

    .status {
      height: 18px;
      display: flex;
      align-items: center;
      padding-left: 7px;
      background: #f1f1f1;
    }
    .status .ready { width: 43px; }
    .status .numlabel { width: 42px; }
    .views { margin-left: auto; display: grid; grid-template-columns: 38px 37px 38px 18px 108px 24px 58px; height: 18px; align-items: center; justify-items: center; }
    .view-on { background: #c6c6c6; justify-self: stretch; align-self: stretch; display: flex; align-items: center; justify-content: center; }
    .slider { width: 100px; height: 1px; background: #888; position: relative; }
    .knob { position: absolute; left: 50px; top: -5px; width: 3px; height: 11px; background: #666; }

    /* floating bits over the sheet */
    .mini {
      position: absolute;
      left: 1024px;
      top: 293px;
      width: 270px;
      height: 56px;
      box-sizing: border-box;
      background: #fff;
      border: 1px solid #c6c6c6;
      box-shadow: 1px 1px 3px rgba(0, 0, 0, .25);
      padding: 3px 3px 0;
    }
    .mini-top { grid-template-columns: 68px 50px 22px 22px 22px 10px 26px 16px 28px; height: 24px; }
    .mini-bot { grid-template-columns: 20px 23px 23px 24px 6px 3px 24px 8px 4px 18px 4px 8px 3px 22px 22px 22px; height: 25px; margin-top: -1px; }
    .mini .combo { padding-right: 5px; padding-bottom: 2px; height: 24px; }

    .menu {
      position: absolute;
      left: 1025px;
      top: 364px;
      width: 178px;
      height: 468px;
      box-sizing: border-box;
      padding-top: 2px;
      background: #fff;
      border: 1px solid #c6c6c6;
      box-shadow: 1px 1px 3px rgba(0, 0, 0, .3);
    }
    .mi {
      height: 25px;
      display: grid;
      grid-template-columns: 31px 1fr 20px;
      align-items: center;
      margin-right: 1px;
      color: #444;
      white-space: nowrap;
    }
    .mi .mic { justify-self: center; margin-right: 7px; }
    .mi .mtx { padding-bottom: 3px; }
    .mi.off { color: #b4b4b4; }
    .mi.hot { background: #c4c4c4; color: #333; }
    .sub { width: 0; height: 0; border: 4px solid transparent; border-right: 0; border-left: 4px solid #777; justify-self: end; margin-right: 9px; }
    .msep { height: 3px; display: flex; align-items: center; padding-left: 32px; margin-right: 1px; }
    .msep.thin { height: 1px; }
    .msep.mid { height: 2px; }
    .msep span { flex: 1; height: 1px; background: #dcdcdc; }
    .mhead { height: 23px; display: grid; grid-template-columns: 24px 1fr; align-items: center; margin-right: 1px; }
    .mhead .mic { justify-self: center; padding-left: 1px; }
    .mhead b { background: #e9e9e9; height: 23px; line-height: 20px; padding-left: 9px; font-weight: 700; color: #555; }
    .mpaste { height: 30px; box-sizing: border-box; display: flex; padding: 4px 0 0 29px; gap: 10px; }
    .ptr { position: absolute; left: 1174px; top: 717px; }

    .mark {
      position: absolute;
      left: 1266px;
      top: 926px;
      width: 425px;
      height: 103px;
      display: flex;
    }
    .mark-text {
      width: 253px;
      box-sizing: border-box;
      background: rgba(255, 255, 255, .85);
      display: flex;
      flex-direction: column;
      align-items: center;
      padding: 0 5px 0 0;
      flex: none;
    }
    .mark-cn { font-size: 46px; line-height: 50px; font-weight: 900; color: #ff2d2d; letter-spacing: 0; }
    .mark-en { font-family: 'Liberation Serif', serif; font-size: 34.500px; line-height: 40px; color: #2d7ff0; margin-top: 7px; }
    .tag {
      width: 172px;
      background: #2e80fa;
      border-radius: 24px;
      position: relative;
      overflow: hidden;
      color: #fff;
      font-family: 'Open Sans', 'Liberation Sans', sans-serif;
      font-weight: 700;
      font-size: 86px;
      line-height: 96px;
      letter-spacing: -5px;
      text-align: center;
    }
    .tag-sub { position: absolute; left: 67px; top: 60px; font-family: 'Noto Sans CJK SC', sans-serif; font-size: 20px; line-height: 24px; letter-spacing: 0; font-weight: 400; color: rgba(255, 255, 255, .28); white-space: nowrap; }
    .tag-url { position: absolute; left: 64px; top: 86px; font-family: 'Liberation Sans', sans-serif; font-size: 15px; line-height: 16px; letter-spacing: 0; font-weight: 400; color: rgba(255, 255, 255, .25); }
    .tag-logo { position: absolute; left: 18px; top: 58px; }
  `;

  large(icon: unknown, line: string, second?: unknown) {
    return html`<div class="large">
      <div class="ic">${icon}</div>
      <div>${line}</div>
      <div class="drop">${second ?? caret}</div>
    </div>`;
  }

  renderTitle() {
    return html`
      <div class="titlebar">
        <span></span>
        <div class="title">工作簿3.xlsx - Excel</div>
        <div class="winbtns">
          <svg width="13" height="11" viewBox="0 0 13 11"><path d="M.5.5h12v10H.5zM.5 2.500h12" fill="none" stroke="#fff"/><path d="M6.500 9V4.500M4.500 6.500l2-2 2 2" fill="none" stroke="#fff"/></svg>
          <svg width="10" height="11" viewBox="0 0 10 11"><path d="M0 7h10" stroke="#fff" stroke-width="1.500"/></svg>
          <svg width="10" height="10" viewBox="0 0 10 10"><path d="M.5.500h9v9h-9z" fill="none" stroke="#fff"/><path d="M0 1h10" stroke="#fff" stroke-width="2"/></svg>
          <svg width="10" height="10" viewBox="0 0 10 10"><path d="M.5.5l9 9M9.500.5l-9 9" stroke="#fff" stroke-width="1.800"/></svg>
        </div>
      </div>
      <div class="tabs">
        <div class="tablist">
          ${['文件', '开始', '插入', '页面布局', '公式', '数据', '审阅', '视图', '开发工具', 'PDF工具集'].map(
            (t) => html`<div class="tab ${t === '开始' ? 'on' : ''}">${t}</div>`)}
        </div>
        <div class="tell">${icons.bulb}<span>告诉我您想要做什么...</span></div>
        <div class="login">登录</div>
        <div class="share">${icons.person}<span>共享</span></div>
      </div>`;
  }

  renderRibbon() {
    return html`<div class="ribbon">
      <div class="group g-clip">
        <div class="body b-clip">
          ${this.large(icons.paste, '粘贴')}
          <div class="clip-list">
            <div class="small">${icons.scissors}<span>剪切</span></div>
            <div class="small">${icons.copy}<span>复制</span><span class="copy-caret">${caret}</span></div>
            <div class="small">${icons.brush}<span>格式刷</span></div>
          </div>
        </div>
        <div class="glabel">剪贴板<span class="launch">${icons.launcher}</span></div>
      </div>

      <div class="group g-font">
        <div class="body b-font stack">
          <div class="row font-top">
            <div class="combo"><span>等线</span>${caret}</div>
            <div class="combo"><span>11</span>${caret}</div>
            <span class="grow">A</span>
            <span class="shrink">A</span>
          </div>
          <div class="row font-bot">
            <span class="b">B</span><span class="it">I</span><span class="un">U</span>${caret}
            <i class="sep"></i>${icons.border}${caret}<i class="sep"></i>
            ${icons.fill}${caret}${icons.fontColor}${caret}<i class="sep"></i>${icons.wen}${caret}
          </div>
        </div>
        <div class="glabel">字体<span class="launch">${icons.launcher}</span></div>
      </div>

      <div class="group g-align">
        <div class="body b-align stack">
          <div class="row al-top">
            ${aTop}<div class="on">${aMid}</div>${aBot}<i class="sep"></i>
            ${icons.orient}${caret}<span></span><i class="sep"></i>
            ${icons.wrap}<span class="al-text">自动换行</span>
          </div>
          <div class="row al-bot">
            ${aLeft}<div class="on">${aCenter}</div>${aRight}<i class="sep"></i>
            ${indentDec}${indentInc}<i class="sep"></i>
            ${icons.merge}<span class="al-text">合并后居中</span>${caret}
          </div>
        </div>
        <div class="glabel">对齐方式<span class="launch">${icons.launcher}</span></div>
      </div>

      <div class="group g-num">
        <div class="body b-num stack">
          <div class="row num-top"><div class="combo"><span>常规</span>${caret}</div></div>
          <div class="row num-bot">
            ${icons.currency}${caret}<span></span><span class="pct">%</span><span class="cm">,</span>
            <i class="sep"></i>${icons.decInc}${icons.decDec}
          </div>
        </div>
        <div class="glabel">数字<span class="launch">${icons.launcher}</span></div>
      </div>

      <div class="group g-style">
        <div class="body b-style">
          <div class="large w58">
            <div class="ic">${icons.cond}</div><div>条件格式</div><div class="drop">${caret}</div>
          </div>
          <div class="large w60">
            <div class="ic">${icons.table}</div><div>套用</div><div class="drop">表格格式${caret}</div>
          </div>
          <div class="gallery">
            <div class="g-cells">
              <div class="bad2">差_Sheet4</div><div class="good2">好_Sheet4</div><div>千位分隔 2</div>
              <div class="normal">常规</div><div class="bad">差</div><div class="good">好</div>
            </div>
            <div class="g-scroll">
              <div class="first"><i class="caret up"></i></div>
              <div>${caret}</div>
              <div class="last"><i class="bar"></i>${caret}</div>
            </div>
          </div>
        </div>
        <div class="glabel">样式</div>
      </div>

      <div class="group g-cell">
        <div class="body b-cell">
          ${this.large(icons.insert, '插入')}
          ${this.large(icons.remove, '删除')}
          ${this.large(icons.format, '格式')}
        </div>
        <div class="glabel">单元格</div>
      </div>

      <div class="group g-edit">
        <div class="body b-edit">
          <div class="edit-list">
            <div class="small"><span class="ic">${icons.sigma}</span><span>自动求和</span><span class="sum">${caret}</span></div>
            <div class="small"><span class="ic">${icons.fillDown}</span><span>填充</span>${caret}</div>
            <div class="small"><span class="ic">${icons.eraser}</span><span>清除</span>${caret}</div>
          </div>
          ${this.large(icons.sort, '排序和筛选')}
          <span></span>
          ${this.large(icons.find, '查找和选择')}
        </div>
        <div class="glabel">编辑</div>
      </div>

      <div class="group g-inv">
        <div class="body">${this.large(icons.invoice, '发票', '查验')}</div>
        <div class="glabel">发票查验</div>
      </div>

      <div class="collapse"><svg width="10" height="6" viewBox="0 0 10 6"><path d="M1 5l4-4 4 4" fill="none" stroke="#666" stroke-width="1.500"/></svg></div>
    </div>`;
  }

  renderBars() {
    return html`
      <div class="qat">
        ${icons.save}<span></span>${icons.redo}<i class="caret faintc"></i><span></span>
        ${icons.undo}${caret}<span></span>${icons.printPreview}<span></span>${icons.search}<span></span>
        <span class="faint">${caret}</span>
      </div>
      <div class="fbar">
        <div class="fbox name"><span>D2</span>${caret}</div>
        <div class="dots"><span></span><span></span><span></span></div>
        <div class="fbox fx">
          <svg width="11" height="11" viewBox="0 0 11 11"><path d="M.5.5l10 10M10.500.5l-10 10" stroke="#c6c6c6" stroke-width="1.600"/></svg>
          <svg width="13" height="11" viewBox="0 0 13 11"><path d="M1 5.500l4 4 7-8.500" fill="none" stroke="#c6c6c6" stroke-width="2.200"/></svg>
          <span class="fxt">fx</span>
        </div>
        <div class="fbox input"><svg width="10" height="7" viewBox="0 0 10 7"><path d="M1 1l4 4 4-4" fill="none" stroke="#666" stroke-width="2"/></svg></div>
      </div>`;
  }

  cellClass(col: number, row: number) {
    const out = ['cell'];
    if ([1, 2, 3, 5].includes(col)) out.push('brk');
    if (col === 6) out.push('last');
    if (col === 3 && row === 2) out.push('d2');
    if (col === 3 && (row === 3 || row === 4)) out.push('d3');
    if (col === 3 && row === 5) out.push('d5');
    return out.join(' ');
  }

  renderSheet() {
    return html`<div class="sheet">
      <div class="grid">
        <div class="corner"><i class="tri"></i></div>
        ${columns.map((c) => html`<div class="chead ${c === 'D' ? 'sel' : ''} ${c === 'G' ? 'last' : ''}">${c}</div>`)}
        ${rows.map((r) => html`
          <div class="rhead ${r >= 2 && r <= 5 ? 'sel' : ''}">${r < 18 ? r : ''}</div>
          ${columns.map((_, c) => html`<div class=${this.cellClass(c, r)}>${table[r]?.[c] ?? ''}</div>`)}
        `)}
      </div>
      <div class="vscroll">
        <div class="vbtn"><i class="caret up"></i></div>
        <div class="thumb"></div>
        <div class="vbtn down">${caret}</div>
      </div>
    </div>`;
  }

  renderTabs() {
    return html`<div class="sheets">
      <div class="nav"><i class="lf"></i><i class="rt"></i></div>
      <div class="stabs">
        <div class="st">成绩表</div>
        <div class="st">员工信息</div>
        <div class="st">田字格</div>
        <div class="st"></div>
        <div class="st blue">XXX公司销售额</div>
        <span></span>
        <div class="st orange">课程表</div>
        <div class="st"></div>
        <div class="st plain">Sheet5</div>
        <div class="st active">Sheet1</div>
      </div>
      <div class="plus"><svg width="16" height="16" viewBox="0 0 16 16"><circle cx="8" cy="8" r="7.300" fill="none" stroke="#777"/><path d="M8 4v8M4 8h8" stroke="#777" stroke-width="1.500"/></svg></div>
      <div class="sh-dots"><span></span><span></span><span></span></div>
      <div class="hscroll"><div class="hleft"><i class="lf"></i></div></div>
    </div>
    <div class="status">
      <span class="ready">就绪</span><span class="numlabel">数字</span>${icons.macro}
      <div class="views">
        <div class="view-on"><svg width="15" height="13" viewBox="0 0 15 13"><path d="M.5.5h14v12H.5zM5 .5v12M10 .5v12M.5 4.500h14M.5 8.500h14" fill="none" stroke="#666"/></svg></div>
        <svg width="14" height="14" viewBox="0 0 14 14"><path d="M.5.5h13v13H.5z" fill="none" stroke="#666"/><path d="M3.500 3.500h7v7h-7z" fill="none" stroke="#666"/></svg>
        <svg width="14" height="14" viewBox="0 0 14 14"><path d="M.5.5h13v13H.5zM7 .5V7H.5" fill="none" stroke="#666"/></svg>
        <span>-</span>
        <div class="slider"><i class="knob"></i></div>
        <span>+</span>
        <span>100%</span>
      </div>
    </div>`;
  }

  renderFloating() {
    return html`
      <div class="mini">
        <div class="row mini-top">
          <div class="combo"><span>等线</span>${caret}</div>
          <div class="combo"><span>11</span>${caret}</div>
          <span class="grow">A</span>
          <span class="shrink">A</span>
          ${icons.currency}${caret}
          <span class="pct">%</span><span class="cm">,</span>${icons.merge}
        </div>
        <div class="row mini-bot">
          <span class="b">B</span><span class="it">I</span>
          <div class="on">${aCenter}</div>
          ${icons.fill}${caret}<span></span>
          ${icons.fontColor}${caret}<span></span>
          ${icons.border}<span></span>${caret}<span></span>
          ${icons.decInc}${icons.decDec}${icons.brush}
        </div>
      </div>
      <div class="menu">
        ${menu.map((m) => this.renderMenuRow(m))}
      </div>
      <div class="ptr">${icons.cursor}</div>
      <div class="mark">
        <div class="mark-text">
          <div class="mark-cn">电脑技术网</div>
          <div class="mark-en">www.tagxp.com</div>
        </div>
        <div class="tag">
          TAG
          <svg class="tag-logo" width="42" height="38" viewBox="0 0 42 38"><path d="M5 22C4 10 18 0 36 4 24 4 14 10 14 20c0 6 6 10 12 8 5-2 6-8 2-10-3-1-5 1-5 3" fill="none" stroke="rgba(255,255,255,.28)" stroke-width="5"/></svg>
          <div class="tag-sub">极光下载站</div>
          <div class="tag-url">www.xz7.com</div>
        </div>
      </div>`;
  }

  renderMenuRow(m: MenuRow) {
    if (m.sep === 'paste') {
      return html`
        <div class="mhead"><span class="mic"><svg width="15" height="16" viewBox="0 0 28 30"><rect x="0" y="3" width="24" height="25" rx="1" fill="#eec583"/><path d="M5 7V4h4V1h6v3h4v3z" fill="#666"/><path d="M14.500 11.500h8l5 5v13h-13z" fill="#fff" stroke="#666" stroke-width="1.500"/></svg></span><b>粘贴选项:</b></div>
        <div class="mpaste">${icons.pasteKeep}${icons.pasteValues}</div>`;
    }
    if (m.sep) return html`<div class="msep ${m.sep === 'wide' ? '' : m.sep}"><span></span></div>`;
    return html`<div class="mi ${m.off ? 'off' : ''} ${m.hot ? 'hot' : ''}">
      <span class="mic">${m.icon ?? ''}</span>
      <span class="mtx">${m.label}(<u>${m.key}</u>)${m.after ?? ''}</span>
      ${m.sub ? html`<i class="sub"></i>` : ''}
    </div>`;
  }

  render() {
    return html`
      ${this.renderTitle()}
      ${this.renderRibbon()}
      ${this.renderBars()}
      ${this.renderSheet()}
      ${this.renderTabs()}
      ${this.renderFloating()}
    `;
  }
}
